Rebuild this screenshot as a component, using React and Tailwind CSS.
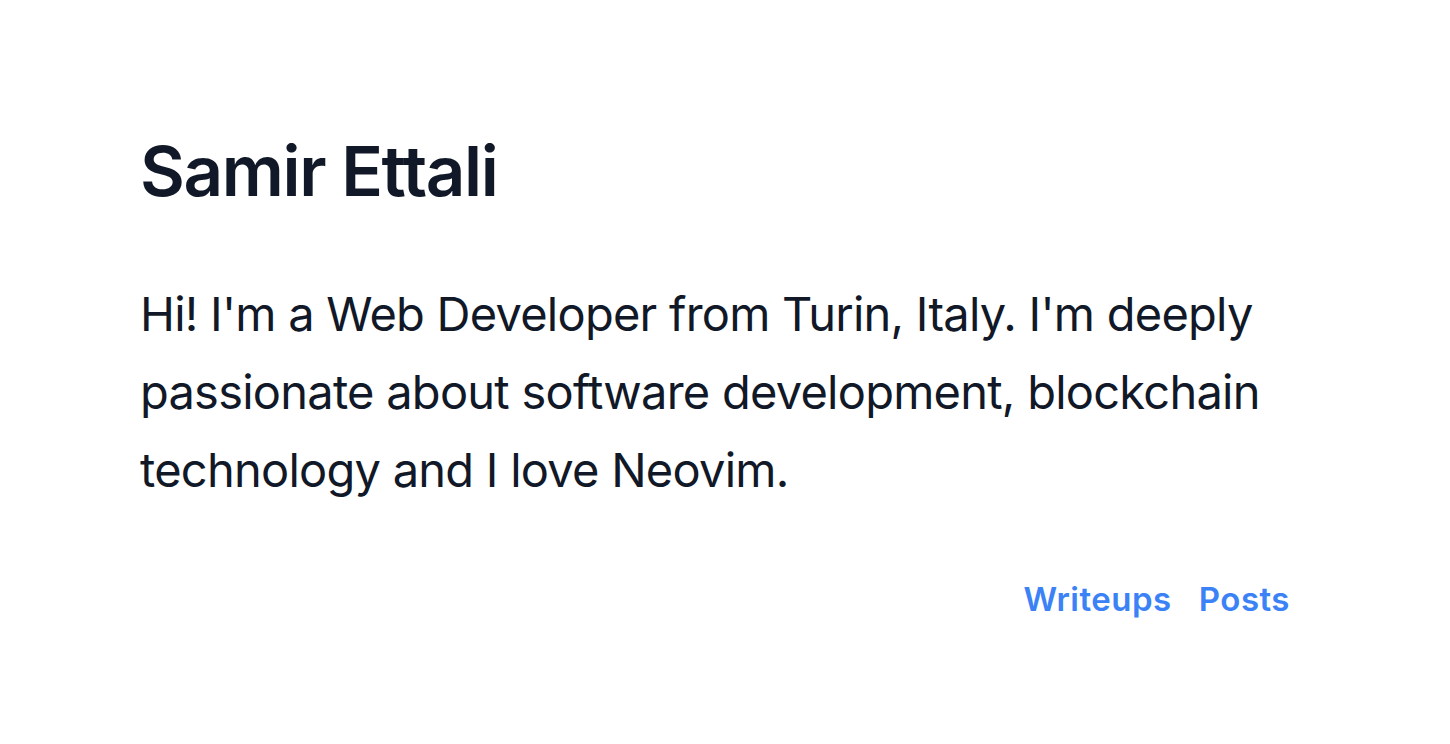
export default function App() {
    return (
        <div className="min-h-screen bg-white text-[#111827] [font-variant-ligatures:none]" style={{ fontFamily: "Inter, 'Noto Sans', sans-serif" }}>
            <main className="pl-[140px] pr-[160px] pt-[130px]">
                <h1 className="text-[69px] font-semibold leading-[1.2] tracking-[-0.02em]">Samir Ettali</h1>

                <p className="mt-[62px] text-[47px] leading-[78px] tracking-[-0.016em]">
                    Hi! I'm a Web Developer from Turin, Italy. I'm deeply passionate about software development, blockchain technology and I love Neovim.
                </p>

                {/* Links */}
                <nav className="mt-[66px] flex justify-end gap-[27px] text-[33px] font-semibold tracking-[0.015em] text-[#3b82f6]">
                    <a href="#">Writeups</a>
                    <a href="#">Posts</a>
                </nav>
            </main>
        </div>
    );
}
